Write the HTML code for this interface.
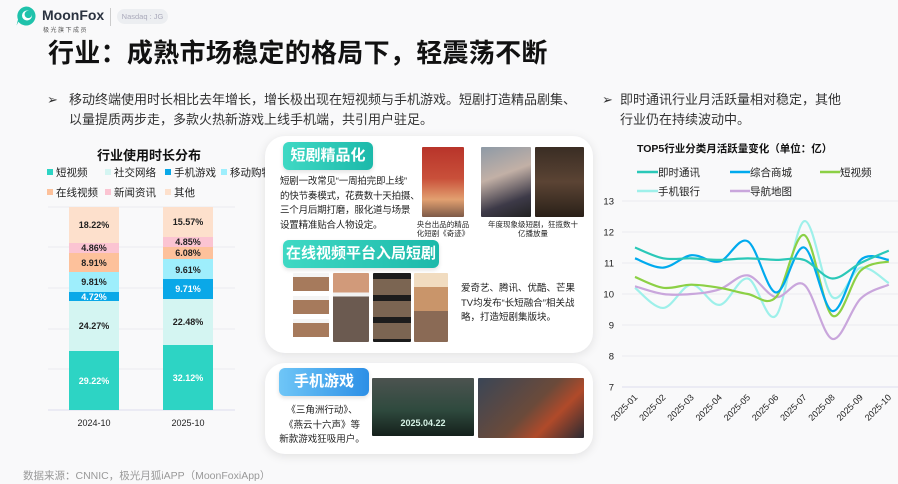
<!DOCTYPE html>
<html><head><meta charset="utf-8">
<style>
*{margin:0;padding:0;box-sizing:border-box}
body{width:898px;height:484px;overflow:hidden;background:#f9f9fa;font-family:"Liberation Sans","Noto Sans CJK SC",sans-serif;color:#222;position:relative}
.a{position:absolute;white-space:nowrap}
.title{left:48px;top:33px;font-size:26px;font-weight:bold;color:#111;letter-spacing:0.3px}
.bl{font-size:13px;color:#333;line-height:20px}
.card{position:absolute;background:#fff;border-radius:20px;box-shadow:0 2px 10px rgba(0,0,0,0.10)}
.badge{position:absolute;color:#fff;font-weight:bold;font-size:15px;border-radius:6px;text-align:center;line-height:28px;box-shadow:0 2px 4px rgba(0,0,0,0.12)}
.tg{background:linear-gradient(90deg,#3fd9c4,#1cb9aa)}
.tb{background:linear-gradient(90deg,#6fc6f7,#2c8fe6)}
.p{font-size:9.5px;line-height:14.5px;color:#222}
.img{position:absolute;border-radius:1px}
.lg{font-size:10.5px;color:#222}
.sq{display:inline-block;width:6px;height:6px;margin-right:3px;vertical-align:1px}
.cap{position:absolute;font-size:7.5px;line-height:9px;text-align:center;color:#222}
</style></head><body>
<!-- logo -->
<svg class="a" style="left:15px;top:5px" width="22" height="22" viewBox="0 0 22 22">
<path d="M11 1.5a9.5 9.5 0 1 1 -7.6 15.2 L1.5 20.5 L3 14.5 A9.5 9.5 0 0 1 11 1.5z" fill="#1fc2ab"/>
<circle cx="12" cy="10.5" r="5" fill="#fff"/>
<circle cx="13.3" cy="9.4" r="3.7" fill="#1fc2ab"/>
</svg>
<div class="a" style="left:42px;top:7px;font-size:14px;font-weight:bold;color:#2b3340">MoonFox</div>
<div class="a" style="left:43px;top:25px;font-size:6px;color:#555;letter-spacing:1.5px">极光旗下成员</div>
<div class="a" style="left:110px;top:8px;width:1px;height:18px;background:#ccc"></div>
<div class="a" style="left:117px;top:9px;width:51px;height:15px;border-radius:8px;background:#eceef1;font-size:7.5px;color:#aab;text-align:center;line-height:15px">Nasdaq : JG</div>

<div class="a title">行业：成熟市场稳定的格局下，轻震荡不断</div>
<div class="a bl" style="left:47px;top:90px">➢</div>
<div class="a bl" style="left:69px;top:90px">移动终端使用时长相比去年增长，增长极出现在短视频与手机游戏。短剧打造精品剧集、<br>以量提质两步走，多款火热新游戏上线手机端，共引用户驻足。</div>
<div class="a bl" style="left:602px;top:90px">➢</div>
<div class="a bl" style="left:620px;top:90px">即时通讯行业月活跃量相对稳定，其他<br>行业仍在持续波动中。</div>

<!-- left chart -->
<div class="a" style="left:97px;top:145px;font-size:13px;font-weight:bold;color:#111">行业使用时长分布</div>
<div class="a lg" style="left:47px;top:165px"><span class="sq" style="background:#2dd4c4"></span>短视频</div>
<div class="a lg" style="left:105px;top:165px"><span class="sq" style="background:#d4f5f2"></span>社交网络</div>
<div class="a lg" style="left:165px;top:165px"><span class="sq" style="background:#0aa8e8"></span>手机游戏</div>
<div class="a lg" style="left:221px;top:165px"><span class="sq" style="background:#9eeefc"></span>移动购物</div>
<div class="a lg" style="left:47px;top:185px"><span class="sq" style="background:#fdc19b"></span>在线视频</div>
<div class="a lg" style="left:105px;top:185px"><span class="sq" style="background:#fbc4d2"></span>新闻资讯</div>
<div class="a lg" style="left:165px;top:185px"><span class="sq" style="background:#fde0cc"></span>其他</div>
<svg class="a" style="left:0;top:0" width="270" height="440">
<g stroke="#ececf0" stroke-width="1">
<line x1="48" x2="235" y1="207" y2="207"/><line x1="48" x2="235" y1="247" y2="247"/><line x1="48" x2="235" y1="288" y2="288"/><line x1="48" x2="235" y1="329" y2="329"/><line x1="48" x2="235" y1="369" y2="369"/><line x1="48" x2="235" y1="410" y2="410" stroke="#dde"/>
</g>
<g>
<rect x="69" y="207" width="50" height="36" fill="#fde0cc"/>
<rect x="69" y="243" width="50" height="10" fill="#fbc4d2"/>
<rect x="69" y="253" width="50" height="19" fill="#fdc19b"/>
<rect x="69" y="272" width="50" height="20" fill="#9eeefc"/>
<rect x="69" y="292" width="50" height="9" fill="#0aa8e8"/>
<rect x="69" y="301" width="50" height="50" fill="#d4f5f2"/>
<rect x="69" y="351" width="50" height="59" fill="#2dd4c4"/>
<rect x="163" y="207" width="50" height="30" fill="#fde0cc"/>
<rect x="163" y="237" width="50" height="10" fill="#fbc4d2"/>
<rect x="163" y="247" width="50" height="12" fill="#fdc19b"/>
<rect x="163" y="259" width="50" height="20" fill="#9eeefc"/>
<rect x="163" y="279" width="50" height="20" fill="#0aa8e8"/>
<rect x="163" y="299" width="50" height="46" fill="#d4f5f2"/>
<rect x="163" y="345" width="50" height="65" fill="#2dd4c4"/>
</g>
<g font-size="9" font-weight="bold" text-anchor="middle" fill="#222" font-family="Liberation Sans,sans-serif">
<text x="94" y="228">18.22%</text><text x="94" y="251">4.86%</text><text x="94" y="266">8.91%</text><text x="94" y="285">9.81%</text><text x="94" y="300" fill="#fff">4.72%</text><text x="94" y="329">24.27%</text><text x="94" y="384" fill="#fff">29.22%</text>
<text x="188" y="225">15.57%</text><text x="188" y="245">4.85%</text><text x="188" y="256">6.08%</text><text x="188" y="273">9.61%</text><text x="188" y="292" fill="#fff">9.71%</text><text x="188" y="325">22.48%</text><text x="188" y="381" fill="#fff">32.12%</text>
<text x="94" y="426" font-weight="normal" fill="#222">2024-10</text><text x="188" y="426" font-weight="normal">2025-10</text>
</g>
</svg>
<div class="a" style="left:23px;top:468px;font-size:10.5px;color:#999">数据来源：CNNIC，极光月狐iAPP（MoonFoxiApp）</div>

<!-- middle cards -->
<div class="card" style="left:265px;top:136px;width:328px;height:217px"></div>
<div class="card" style="left:265px;top:363px;width:328px;height:91px"></div>
<div class="badge tg" style="left:283px;top:142px;width:90px">短剧精品化</div>
<div class="a p" style="left:280px;top:175px;letter-spacing:-0.2px">短剧一改常见“一周拍完即上线”<br>的快节奏模式，花费数十天拍摄、<br>三个月后期打磨，服化道与场景<br>设置精准贴合人物设定。</div>
<div class="img" style="left:422px;top:147px;width:42px;height:70px;background:linear-gradient(180deg,#b8342a 0%,#c9503a 45%,#e2a070 75%,#7d5a48 100%)"></div>
<div class="cap" style="left:410px;top:220px;width:66px">央台出品的精品<br>化短剧《奇迹》</div>
<div class="img" style="left:481px;top:147px;width:50px;height:70px;background:linear-gradient(160deg,#8e9aa6 0%,#c2b0a6 40%,#3d3a48 75%,#222 100%)"></div>
<div class="img" style="left:535px;top:147px;width:49px;height:70px;background:linear-gradient(180deg,#3a2d24 0%,#5b4434 50%,#2a2018 100%)"></div>
<div class="cap" style="left:480px;top:220px;width:106px">年度现象级短剧，狂揽数十<br>亿播放量</div>
<div class="badge tg" style="left:283px;top:240px;width:156px">在线视频平台入局短剧</div>
<div class="img" style="left:293px;top:273px;width:36px;height:69px;background:repeating-linear-gradient(180deg,#f4f4f4 0 4px,#a67a5c 4px 18px,#fff 18px 23px)"></div>
<div class="img" style="left:333px;top:273px;width:36px;height:69px;background:linear-gradient(180deg,#d19a7a 0 28%,#f2f2f2 28% 34%,#6b5a50 34% 100%)"></div>
<div class="img" style="left:373px;top:273px;width:38px;height:69px;background:repeating-linear-gradient(180deg,#1c1c1c 0 6px,#7b6552 6px 22px)"></div>
<div class="img" style="left:414px;top:273px;width:34px;height:69px;background:linear-gradient(180deg,#f1dcc0 0 20%,#c9956a 20% 55%,#8a6a55 55% 100%)"></div>
<div class="a p" style="left:461px;top:282px">爱奇艺、腾讯、优酷、芒果<br>TV均发布“长短融合”相关战<br>略，打造短剧集版块。</div>
<div class="badge tb" style="left:279px;top:368px;width:90px">手机游戏</div>
<div class="a p" style="left:272px;top:404px;width:100px;text-align:center">《三角洲行动》、<br>《燕云十六声》等<br>新款游戏狂吸用户。</div>
<div class="img" style="left:372px;top:378px;width:102px;height:58px;background:linear-gradient(180deg,#4c5350 0%,#2f4a3e 55%,#15201b 100%)"></div>
<div class="a" style="left:372px;top:418px;width:102px;text-align:center;font-size:9px;font-weight:bold;color:#d6f3e6">2025.04.22</div>
<div class="img" style="left:478px;top:378px;width:106px;height:60px;background:linear-gradient(135deg,#3a4656 0%,#6b4a3a 50%,#b04a2a 70%,#2a2a32 100%)"></div>

<!-- right chart -->
<div class="a" style="left:637px;top:141px;font-size:10.5px;font-weight:bold;color:#111">TOP5行业分类月活跃量变化（单位：亿）</div>
<svg class="a" style="left:590px;top:155px" width="308" height="329" viewBox="590 155 308 329" id="rc"></svg>
<script>
(function(){
var s=document.getElementById('rc'),h='';
function Y(v){return 201+(13-v)*31}
function X(i){return 635+i*28.2}
for(var v=7;v<=13;v++){h+='<line x1="622" x2="898" y1="'+Y(v)+'" y2="'+Y(v)+'" stroke="'+(v==7?'#dde':'#ececf0')+'"/>';
h+='<text x="614" y="'+(Y(v)+3.5)+'" font-size="9.5" text-anchor="end" fill="#222">'+v+'</text>';}
for(var i=0;i<10;i++){var x=X(i)+3,y=398;h+='<text x="'+x+'" y="'+y+'" font-size="9" text-anchor="end" fill="#222" transform="rotate(-45 '+x+' '+y+')">2025-'+(i<9?'0':'')+(i+1)+'</text>';}
var S=[
['#9ef0ea',[10.2,9.55,10.3,9.65,10.5,9.3,12.35,9.9,10.85,10.35]],
['#c9a6dc',[10.25,10.0,10.0,10.15,10.6,9.9,10.3,8.55,9.85,10.3]],
['#8cd045',[10.55,10.2,10.3,10.2,10.0,9.9,11.9,9.3,10.75,11.05]],
['#00aaee',[11.15,10.85,11.25,11.05,11.7,10.05,11.5,9.45,11.1,11.1]],
['#2ac8b8',[11.5,11.15,11.15,11.1,11.15,11.1,11.1,10.5,11.0,11.4]]];
S.forEach(function(sr){var p=sr[1].map(function(v,i){return [X(i),Y(v)]});var d='M'+p[0];
for(var i=0;i<p.length-1;i++){var p0=p[i-1]||p[i],p1=p[i],p2=p[i+1],p3=p[i+2]||p2;
d+='C'+(p1[0]+(p2[0]-p0[0])/6)+','+(p1[1]+(p2[1]-p0[1])/6)+' '+(p2[0]-(p3[0]-p1[0])/6)+','+(p2[1]-(p3[1]-p1[1])/6)+' '+p2;}
h+='<path d="'+d+'" fill="none" stroke="'+sr[0]+'" stroke-width="2.2"/>';});
s.innerHTML=h;})();
</script>
<svg class="a" style="left:636px;top:165px" width="260" height="32">
<g stroke-width="2.5"><line x1="1" x2="22" y1="7" y2="7" stroke="#2ac8b8"/><line x1="94" x2="114" y1="7" y2="7" stroke="#00aaee"/><line x1="184" x2="204" y1="7" y2="7" stroke="#8cd045"/><line x1="1" x2="22" y1="26" y2="26" stroke="#9ef0ea"/><line x1="94" x2="114" y1="26" y2="26" stroke="#c9a6dc"/></g>
<g font-size="10.5" fill="#222"><text x="22" y="11">即时通讯</text><text x="114" y="11">综合商城</text><text x="204" y="11">短视频</text><text x="22" y="30">手机银行</text><text x="114" y="30">导航地图</text></g>
</svg>
</body></html>
